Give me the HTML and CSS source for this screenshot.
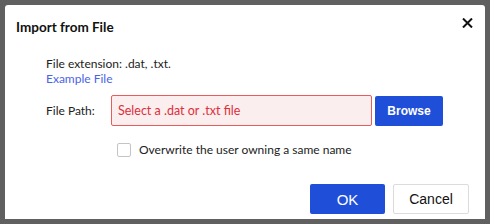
FILE: index.html
```html
<!DOCTYPE html>
<html lang="en">

<head>
    <meta charset="UTF-8">
    <title>Import from File</title>
    <link rel="stylesheet" href="styles.css">
</head>

<body>

    <div class="dialog">
        <div class="dialog-header">
            <h2 class="dialog-title">Import from File</h2>
            <button type="button" class="close-btn" aria-label="Close">
                <svg width="11" height="10" viewBox="0 0 11 10">
                    <path d="M1 0.5 L10 9.5 M10 0.5 L1 9.5" stroke="#111" stroke-width="2" fill="none" />
                </svg>
            </button>
        </div>

        <div class="dialog-body">
            <div class="hint">File extension: .dat, .txt.</div>
            <a class="example-link" href="#">Example File</a>

            <div class="path-row">
                <label for="file-path">File Path:</label>
                <input type="text" id="file-path" class="path-input is-error" placeholder="Select a .dat or .txt file">
                <button type="button" class="btn btn-primary btn-browse">Browse</button>
            </div>

            <label class="check-row">
                <input type="checkbox" class="check">
                <span>Overwrite the user owning a same name</span>
            </label>
        </div>

        <div class="dialog-footer">
            <button type="button" class="btn btn-primary btn-ok">OK</button>
            <button type="button" class="btn btn-cancel">Cancel</button>
        </div>
    </div>

</body>

</html>
```

FILE: styles.css
```css
body {
    margin: 0;
    width: 490px;
    height: 224px;
    padding: 5px;
    box-sizing: border-box;
    background: #606060;
    font-family: Lato, "Noto Sans", sans-serif;
    font-size: 12px;
    color: #222;
}

.dialog {
    width: 480px;
    height: 214px;
    background: #fff;
    border-radius: 3px 3px 0 0;
    display: flex;
    flex-direction: column;
}

.dialog-header {
    display: flex;
    justify-content: space-between;
    align-items: flex-start;
    padding: 12px 12px 0 11px;
}

.dialog-title {
    margin: 0;
    font-size: 13.5px;
    font-weight: bold;
    line-height: 20px;
    color: #111;
}

.close-btn {
    border: none;
    background: none;
    padding: 0;
    margin-top: -1px;
    width: 12px;
    height: 12px;
    cursor: pointer;
}

.dialog-body {
    padding: 19px 0 0 41px;
    flex: 1;
}

.hint {
    line-height: 15px;
}

.example-link {
    display: block;
    line-height: 15px;
    color: #4a64e8;
    text-decoration: none;
}

.path-row {
    display: flex;
    align-items: center;
    margin-top: 9px;
}

.path-row label {
    width: 65px;
}

.path-input {
    width: 261px;
    height: 31px;
    box-sizing: border-box;
    padding: 0 6px;
    border: 1px solid #d9d9d9;
    border-radius: 2px;
    font-family: inherit;
    font-size: 12.5px;
    outline: none;
}

.path-input.is-error {
    background: #fbeeee;
    border-color: #e85c5c;
}

.path-input.is-error::placeholder {
    color: #de2e3c;
}

.btn {
    height: 30px;
    border: 1px solid transparent;
    border-radius: 2px;
    font-family: "Liberation Sans", Arial, sans-serif;
    cursor: pointer;
}

.btn-primary {
    background: #1f4fd9;
    color: #fff;
}

.btn-browse {
    width: 68px;
    margin-left: 3px;
    font-size: 12px;
    font-weight: bold;
}

.check-row {
    display: flex;
    align-items: center;
    margin: 16px 0 0 70px;
}

.check {
    appearance: none;
    width: 14px;
    height: 14px;
    margin: 0 8px 0 1px;
    border: 1px solid #c4c4c4;
    border-radius: 2px;
    background: #fff;
}

.dialog-footer {
    display: flex;
    justify-content: flex-end;
    gap: 8px;
    padding: 0 16px 5px 0;
}

.btn-ok {
    width: 75px;
    font-size: 15px;
}

.btn-cancel {
    width: 76px;
    background: #fff;
    border-color: #dcdcdc;
    color: #111;
    font-size: 14px;
}
```
